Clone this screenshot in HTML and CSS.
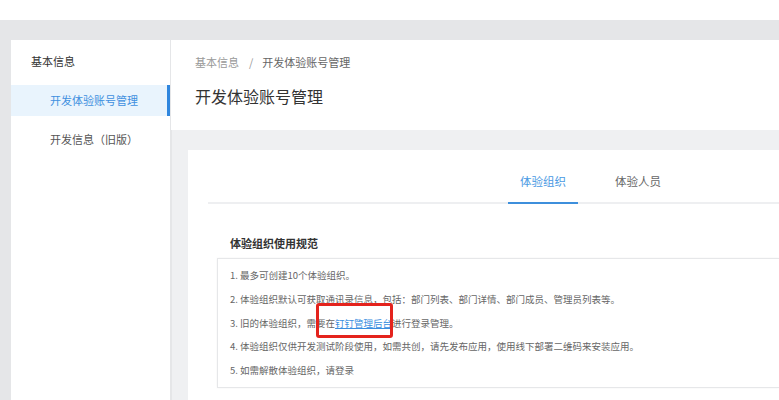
FILE: index.html
```html
<!DOCTYPE html>
<html lang="zh">
<head>
<meta charset="utf-8">
<link rel="stylesheet" href="styles.css">
</head>
<body>
<div class="topbar"></div>
<div class="layout">
  <aside class="sidebar">
    <div class="side-title">基本信息</div>
    <div class="side-item active">开发体验账号管理</div>
    <div class="side-item">开发信息（旧版）</div>
  </aside>
  <main class="main">
    <header class="page-header">
      <div class="crumbs"><span class="crumb-muted">基本信息</span><span class="crumb-sep">/</span><span class="crumb-cur">开发体验账号管理</span></div>
      <h1 class="page-title">开发体验账号管理</h1>
    </header>
    <section class="content">
      <div class="card">
        <div class="tabs">
          <div class="tab tab-active">体验组织</div>
          <div class="tab">体验人员</div>
        </div>
        <div class="rules-section">
          <h2 class="rules-title">体验组织使用规范</h2>
          <div class="rules-box">
            <ol class="rules">
              <li>1. 最多可创建10个体验组织。</li>
              <li>2. 体验组织默认可获取通讯录信息，包括：部门列表、部门详情、部门成员、管理员列表等。</li>
              <li>3. 旧的体验组织，需要在<a class="link" href="#">钉钉管理后台</a>进行登录管理。</li>
              <li>4. 体验组织仅供开发测试阶段使用，如需共创，请先发布应用，使用线下部署二维码来安装应用。</li>
              <li>5. 如需解散体验组织，请登录</li>
            </ol>
            <div class="annot"></div>
          </div>
        </div>
      </div>
    </section>
  </main>
</div>
</body>
</html>
```

FILE: styles.css
```css
* { box-sizing: border-box; }
html, body { margin: 0; padding: 0; }
body {
  width: 779px;
  height: 400px;
  overflow: hidden;
  background: #ffffff;
  font-family: "Noto Sans CJK SC", "Noto Sans", sans-serif;
  color: #333;
}
.topbar { height: 20px; background: #fff; }
.layout {
  display: flex;
  background: #e5e6e8;
  padding: 20px 0 0 11px;
  height: 380px;
}
.sidebar {
  width: 159px;
  flex: none;
  background: #fff;
}
.side-title {
  height: 45px;
  line-height: 42px;
  padding-left: 20px;
  font-size: 11px;
  color: #333;
}
.side-item {
  height: 31px;
  line-height: 31px;
  padding-left: 39px;
  font-size: 11px;
  color: #555;
  margin-bottom: 8px;
  position: relative;
}
.side-item.active {
  background: #e9f4fd;
  color: #3f90e0;
}
.side-item.active::after {
  content: "";
  position: absolute;
  right: 0;
  top: 0;
  bottom: 0;
  width: 3px;
  background: #2f86de;
}
.main {
  flex: 1;
  display: flex;
  flex-direction: column;
  margin-left: 1px;
  min-width: 0;
}
.page-header {
  background: #fff;
  height: 90px;
  padding: 13px 0 0 24px;
}
.crumbs {
  font-size: 11px;
  line-height: 18px;
  color: #999;
}
.crumb-sep { margin: 0 9px 0 10px; color: #999; }
.crumb-cur { color: #666; }
.page-title {
  margin: 13px 0 0;
  font-size: 16px;
  font-weight: normal;
  line-height: 24px;
  color: #333;
}
.content {
  flex: 1;
  background: #eff0f2;
  padding: 20px 0 0 16px;
  margin-left: 1px;
}
.card {
  background: #fff;
  height: 100%;
  padding: 0 0 0 20px;
}
.tabs {
  display: flex;
  padding: 23px 0 0 300px;
  border-bottom: 2px solid #eeeff1;
}
.tab {
  width: 70px;
  margin-right: 25px;
  text-align: center;
  font-size: 11.5px;
  line-height: 16px;
  padding-bottom: 13px;
  color: #666;
  position: relative;
}
.tab-active { color: #4a9ae3; }
.tab-active::after {
  content: "";
  position: absolute;
  left: 0;
  right: 0;
  bottom: -2px;
  height: 2px;
  background: #3d8fdc;
}
.rules-section { padding: 0 0 0 9px; }
.rules-title {
  margin: 0;
  padding: 31px 0 0 13px;
  height: 54px;
  font-size: 11px;
  line-height: 16px;
  font-weight: bold;
  color: #333;
}
.rules-box {
  position: relative;
  border: 1px solid #e6e7e9;
  border-right: none;
  box-shadow: 0 0 2px rgba(0,0,0,0.05);
  padding: 5px 0 4px 12px;
}
.rules {
  list-style: none;
  margin: 0;
  padding: 0;
}
.rules li {
  font-size: 9.5px;
  line-height: 23.8px;
  color: #666;
  white-space: nowrap;
}
.link {
  color: #3a8ee0;
  text-decoration: underline;
}
.annot {
  position: absolute;
  left: 98px;
  top: 44px;
  width: 77px;
  height: 35px;
  border: 3px solid #e4231d;
  border-radius: 3px;
}
```
